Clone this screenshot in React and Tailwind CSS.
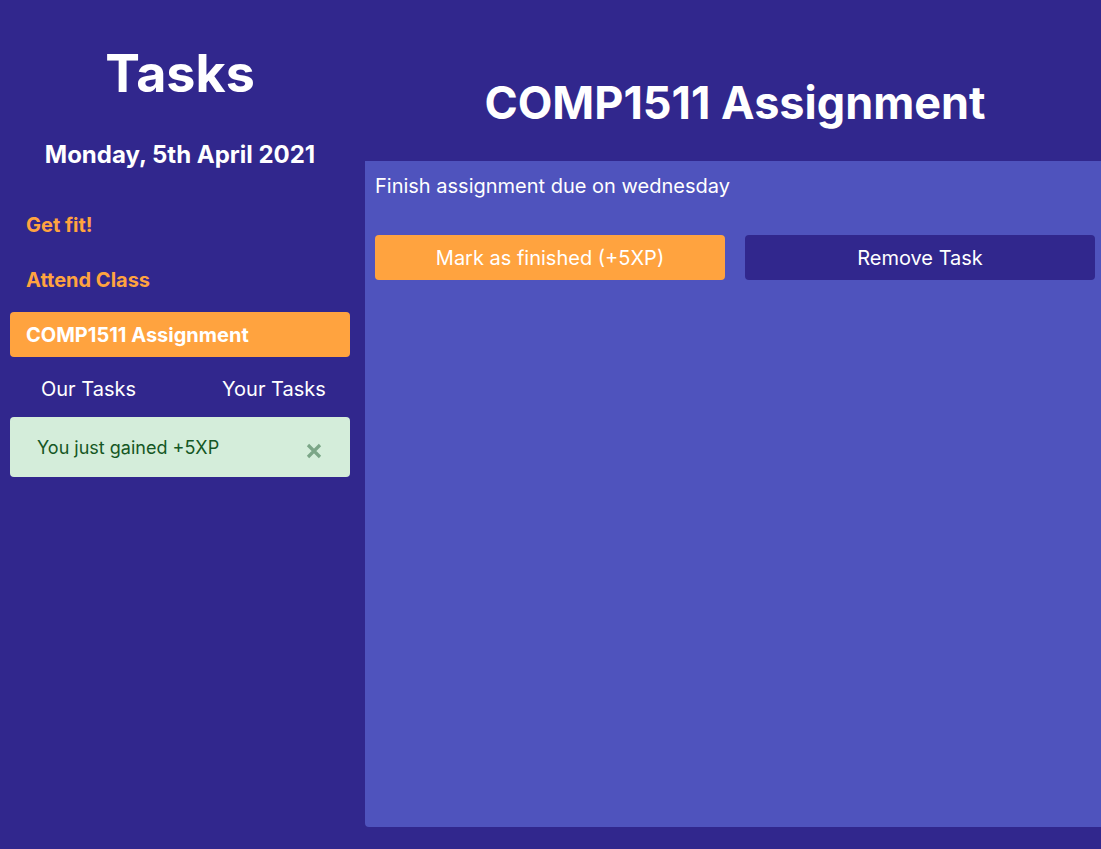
export default function App() {
  const tasks = [
    { name: "Get fit!", active: false },
    { name: "Attend Class", active: false },
    { name: "COMP1511 Assignment", active: true },
  ];
  return (
    <div
      className="flex h-[849px] w-full bg-[#31278d] text-white"
      style={{ fontFamily: "Inter, 'Noto Sans', sans-serif" }}
    >
      <aside className="w-[365px] shrink-0 flex flex-col">
        <h1 className="w-[360px] pt-[43px] text-center text-[52px] leading-[62px] font-bold">Tasks</h1>
        <div className="w-[360px] mt-[33px] text-center text-[24px] leading-[33px] font-bold">
          Monday, 5th April 2021
        </div>
        <div className="mt-[31px] flex flex-col gap-[10px] pl-[10px] pr-[15px]">
          {tasks.map((t) => (
            <div
              key={t.name}
              className={
                t.active
                  ? "h-[45px] flex items-center rounded-[4px] bg-[#ffa33f] px-[16px] text-[20px] font-bold text-white"
                  : "h-[45px] flex items-center px-[16px] text-[20px] font-bold text-[#ffa33f]"
              }
            >
              {t.name}
            </div>
          ))}
        </div>
        <div className="mt-[19px] flex gap-[86px] pl-[41px] text-[20px] leading-[27px]">
          <div>Our Tasks</div>
          <div>Your Tasks</div>
        </div>
        <div className="ml-[10px] mr-[15px] mt-[14px] h-[60px] rounded-[4px] bg-[#d4edda] text-[#155724] flex items-center justify-between pl-[27px] pr-[28px]">
          <span className="text-[18px] leading-[27px]">You just gained +5XP</span>
          <svg width="16" height="16" viewBox="0 0 16 16" className="mt-[7px]">
            <path d="M2 2 L14 14 M14 2 L2 14" stroke="#7ba687" strokeWidth="3.2" strokeLinecap="butt" />
          </svg>
        </div>
      </aside>
      <main className="flex-1 flex flex-col">
        <header className="h-[161px] shrink-0 pt-[76px]">
          <h2 className="text-center text-[45px] leading-[53px] font-bold">COMP1511 Assignment</h2>
        </header>
        <section className="flex-1 mb-[22px] bg-[#4f53bd] rounded-bl-[4px] p-[10px]">
          <p className="text-[20px] leading-[30px]">Finish assignment due on wednesday</p>
          <div className="mt-[34px] flex gap-[20px]">
            <button className="w-[350px] h-[45px] rounded-[4px] bg-[#ffa33f] text-[20px] text-white">
              Mark as finished (+5XP)
            </button>
            <button className="w-[350px] h-[45px] rounded-[4px] bg-[#31278d] text-[20px] text-white">
              Remove Task
            </button>
          </div>
        </section>
      </main>
    </div>
  );
}
